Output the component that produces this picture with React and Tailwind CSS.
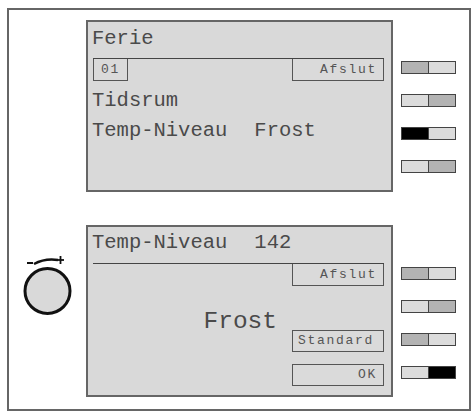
import React from 'react';

const mono = { fontFamily: '"Liberation Mono", "Courier New", monospace' };

const Toggle = ({ left, right }) => (
  <div className="flex w-[55px] h-[13px] border-[1.5px] border-[#444]">
    <div className={`flex-1 border-r-[1.5px] border-[#444] ${left}`} />
    <div className={`flex-1 ${right}`} />
  </div>
);

const dark = 'bg-[#b3b3b3]';
const light = 'bg-[#dcdcdc]';
const black = 'bg-black';

const SmallBox = ({ children, className = '' }) => (
  <div
    className={`h-[22px] flex items-center border-[1.5px] border-[#555] bg-[#dadada] text-[13px] tracking-[1.7px] text-[#555] ${className}`}
    style={mono}
  >
    {children}
  </div>
);

const Knob = () => (
  <svg width="60" height="62" viewBox="0 0 60 62" className="block">
    <line x1="10" y1="8" x2="16" y2="8" stroke="#111" strokeWidth="2" />
    <path d="M17 9 Q28 3 41 5" fill="none" stroke="#111" strokeWidth="2.5" />
    <line x1="40" y1="5" x2="47" y2="5" stroke="#111" strokeWidth="1.8" />
    <line x1="43.5" y1="1" x2="43.5" y2="9" stroke="#111" strokeWidth="1.8" />
    <circle cx="30.5" cy="36" r="22.5" fill="#d9d9d9" stroke="#111" strokeWidth="3" />
  </svg>
);

export default function App() {
  return (
    <div className="w-[473px] h-[412px] bg-white pl-[7px] pt-[8px]" style={mono}>
      <div className="w-[464px] h-[403px] border-2 border-[#666] flex flex-col">
        {/* top display */}
        <div className="flex mt-[10px]">
          <div className="w-[77px]" />
          <div className="w-[307px] h-[172px] bg-[#d9d9d9] border-2 border-[#666] text-[20.5px] text-[#4a4a4a]">
            <div className="pl-[4px] mt-[5px] h-[24px] leading-[24px]">Ferie</div>
            <div className="ml-[5px] mt-[7px] w-[291px] border-t-[1.5px] border-[#444] flex justify-between">
              <SmallBox className="w-[35px] border-t-0 justify-center tracking-[0px] text-[12px]">01</SmallBox>
              <SmallBox className="w-[92px] border-t-0 justify-end pr-[6px]">Afslut</SmallBox>
            </div>
            <div className="pl-[4px] mt-[8px] h-[24px] leading-[24px]">Tidsrum</div>
            <div className="pl-[4px] mt-[6px] h-[24px] leading-[24px] flex">
              <span>Temp-Niveau</span>
              <span className="ml-[27px]">Frost</span>
            </div>
          </div>
          <div className="ml-[8px] pt-[41px] flex flex-col gap-[20px]">
            <Toggle left={dark} right={light} />
            <Toggle left={light} right={dark} />
            <Toggle left={black} right={light} />
            <Toggle left={light} right={dark} />
          </div>
        </div>

        {/* bottom display */}
        <div className="flex mt-[33px]">
          <div className="w-[77px] pl-[8px] pt-[30px]">
            <Knob />
          </div>
          <div className="w-[307px] h-[172px] bg-[#d9d9d9] border-2 border-[#666] text-[20.5px] text-[#4a4a4a]">
            <div className="pl-[4px] mt-[4px] h-[24px] leading-[24px] flex">
              <span>Temp-Niveau</span>
              <span className="ml-[27px]">142</span>
            </div>
            <div className="ml-[5px] mt-[8px] w-[291px] border-t-[1.5px] border-[#444] flex">
              <div className="flex-1 flex justify-end pr-[15px] pt-[44px]">
                <span className="text-[24.5px] leading-[28px]">Frost</span>
              </div>
              <div className="w-[92px] flex flex-col">
                <SmallBox className="border-t-0 justify-end pr-[6px]">Afslut</SmallBox>
                <SmallBox className="mt-[44px] justify-start pl-[5px]">Standard</SmallBox>
                <SmallBox className="mt-[12px] justify-end pr-[6px]">OK</SmallBox>
              </div>
            </div>
          </div>
          <div className="ml-[8px] pt-[42px] flex flex-col gap-[20px]">
            <Toggle left={dark} right={light} />
            <Toggle left={light} right={dark} />
            <Toggle left={dark} right={light} />
            <Toggle left={light} right={black} />
          </div>
        </div>
      </div>
    </div>
  );
}
